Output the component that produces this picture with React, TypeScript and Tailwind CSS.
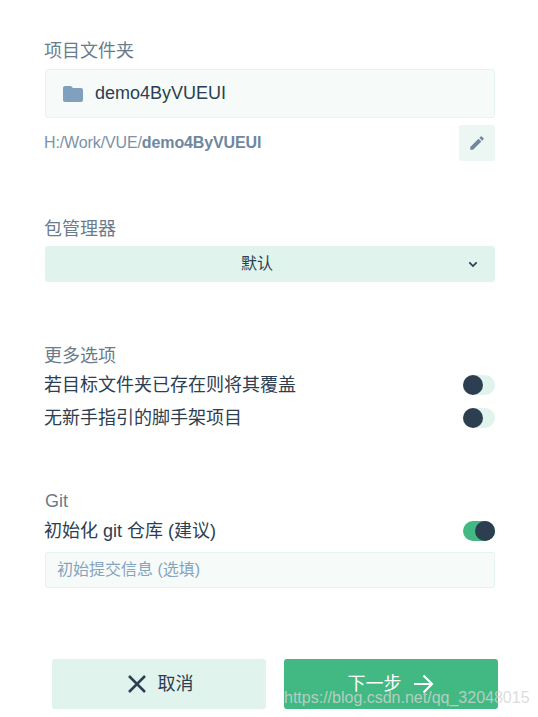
import React from "react";

const font = { fontFamily: '"Liberation Sans", "Noto Sans CJK SC", sans-serif' };

function Toggle({ on }: { on?: boolean }) {
  return (
    <div className={`flex h-5 w-8 rounded-full ${on ? "justify-end bg-[#42b983]" : "justify-start bg-[#e1f3ed]"}`}>
      <div className="size-5 rounded-full bg-[#2c3e50]" />
    </div>
  );
}

function Row({ label, on }: { label: string; on?: boolean }) {
  return (
    <div className="flex h-8 items-center justify-between text-[18px] text-[#2c3e50]">
      <span className="-ml-px">{label}</span>
      <Toggle on={on} />
    </div>
  );
}

export default function App() {
  return (
    <div className="relative h-[717px] w-[538px] overflow-hidden bg-white" style={font}>
      <div className="px-[45px] pt-[39px] w-[540px]">
        <div className="-ml-px text-[18px] leading-[24px] text-[#6a7c8c]">项目文件夹</div>
        <div className="mt-[6px] flex h-[49px] items-center rounded-[3px] border border-[#e4f4ee] bg-[#f6fbf9] pl-[15px] text-[18px] text-[#2c3e50]">
          <svg width="24" height="24" viewBox="0 0 24 24" fill="#81a0bd">
            <path d="M10 4H4c-1.100 0-2 .9-2 2v12c0 1.100.9 2 2 2h16c1.100 0 2-.9 2-2V8c0-1.100-.9-2-2-2h-8l-2-2z" />
          </svg>
          <span className="ml-[10px]">demo4ByVUEUI</span>
        </div>
        <div className="mt-[7px] flex h-9 items-center justify-between">
          <span className="-ml-px text-[16px] tracking-[-0.12px] text-[#7a92aa]">
            H:/Work/VUE/<b className="text-[#6f879f]">demo4ByVUEUI</b>
          </span>
          <div className="flex size-9 items-center justify-center rounded-[3px] bg-[#ecf7f3]">
            <svg width="18" height="18" viewBox="0 0 24 24" fill="#6f879f">
              <path d="M3 17.250V21h3.750L17.810 9.940l-3.750-3.750L3 17.250zM20.710 7.040a1 1 0 0 0 0-1.410l-2.340-2.340a1 1 0 0 0-1.410 0l-1.830 1.830 3.750 3.750 1.830-1.830z" />
            </svg>
          </div>
        </div>

        <div className="-ml-px mt-[56px] text-[18px] leading-[24px] text-[#6a7c8c]">包管理器</div>
        <div className="relative mt-[5px] flex h-9 items-center justify-center rounded-[3px] bg-[#e1f3ed] pr-[26px] text-[16px] text-[#2c3e50]">
          <span>默认</span>
          <svg className="absolute right-[14px] top-[10px]" width="16" height="16" viewBox="0 0 24 24" fill="none" stroke="#2c3e50" strokeWidth="2.500">
            <path d="M6.500 9.500 12 15l5.500-5.500" />
          </svg>
        </div>

        <div className="-ml-px mt-[62px] text-[18px] leading-[24px] text-[#6a7c8c]">更多选项</div>
        <div className="mt-[1px] flex flex-col gap-px">
          <Row label="若目标文件夹已存在则将其覆盖" />
          <Row label="无新手指引的脚手架项目" />
        </div>

        <div className="mt-[55px] text-[18px] leading-[24px] text-[#6a7c8c]">Git</div>
        <div className="mt-[2px]">
          <Row label="初始化 git 仓库 (建议)" on />
        </div>
        <div className="mt-[5px] flex h-9 items-center rounded-[3px] border border-[#e4f4ee] bg-[#f6fbf9] pl-[11px] text-[16px] text-[#86a3be]">
          初始提交信息 (选填)
        </div>
      </div>

      <div className="mt-[71px] flex gap-[18px] pl-[52px] text-[18px]">
        <div className="flex h-[50px] w-[214px] items-center justify-center rounded-[3px] bg-[#e1f3ed] text-[#2c3e50]">
          <svg width="24" height="24" viewBox="0 0 24 24" fill="none" stroke="#2c3e50" strokeWidth="2.500">
            <path d="M4 4l16 16M20 4L4 20" />
          </svg>
          <span className="ml-[9px]">取消</span>
        </div>
        <div className="flex h-[50px] w-[214px] items-center justify-center rounded-[3px] bg-[#42b983] text-white">
          <span>下一步</span>
          <svg className="ml-[9px]" width="24" height="24" viewBox="0 0 24 24" fill="none" stroke="#fff" strokeWidth="2.200">
            <path d="M3 12h17M12.500 3.500 21 12l-8.500 8.500" />
          </svg>
        </div>
      </div>

      <div className="absolute left-[284px] top-[687px] whitespace-nowrap text-[16px] leading-[22px] text-[#d4d4d4]/80">
        https://blog.csdn.net/qq_32048015
      </div>
    </div>
  );
}
